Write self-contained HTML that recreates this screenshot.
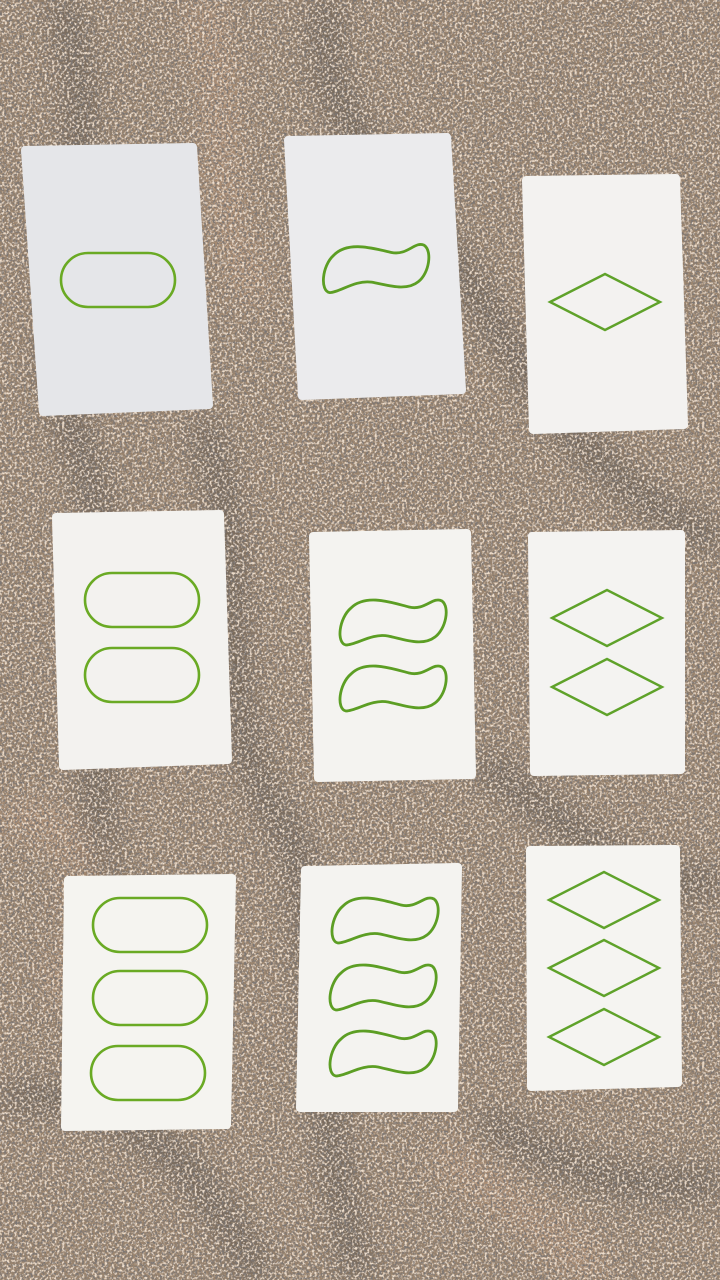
<!DOCTYPE html>
<html><head><meta charset="utf-8"><style>
html,body{margin:0;padding:0;width:720px;height:1280px;overflow:hidden;background:#9a846e}
svg{display:block}
</style></head><body>
<svg width="720" height="1280" viewBox="0 0 720 1280" xmlns="http://www.w3.org/2000/svg">
<defs>
<filter id="n" x="0" y="0" width="100%" height="100%">
<feTurbulence type="fractalNoise" baseFrequency="0.45" numOctaves="2" seed="3"/>
<feColorMatrix type="matrix" values="0 0 0 0 0.2  0 0 0 0 0.18  0 0 0 0 0.17  4 0 0 0 -1.7"/>
</filter>
<filter id="n2" x="0" y="0" width="100%" height="100%">
<feTurbulence type="fractalNoise" baseFrequency="0.4" numOctaves="2" seed="9"/>
<feColorMatrix type="matrix" values="0 0 0 0 0.85  0 0 0 0 0.72  0 0 0 0 0.6  4 0 0 0 -1.9"/>
</filter>
<filter id="b"><feGaussianBlur stdDeviation="14"/></filter>
<path id="sq" d="M-42,-14 C-27,-29 0,-19 16,-15 C32,-11 40,-26 49,-21 C57,-15 53,7 42,15 C29,25 10,17 -5,14 C-21,11 -37,23 -47,23 C-57,21 -54,-4 -42,-14 Z" fill="none" stroke="#5c9e24" stroke-width="2.8"/>
<rect id="ov" x="-57" y="-27" width="114" height="54" rx="27" fill="none" stroke="#6aaa24" stroke-width="2.6"/>
<path id="di" d="M-55,0 L0,-28 L55,0 L0,28 Z" fill="none" stroke="#5fa22a" stroke-width="2.4"/>
</defs>
<rect width="720" height="1280" fill="#9a846e"/>
<g filter="url(#b)" fill="none" stroke="#4a4440" stroke-width="30" opacity="0.55">
<path d="M60,0 C120,150 20,300 80,450 C140,600 60,800 120,950"/>
<path d="M330,0 C300,120 420,200 480,300 C560,430 620,500 720,540"/>
<path d="M200,420 C260,560 200,700 280,820 C330,900 300,1050 360,1280"/>
<path d="M480,760 C560,820 640,900 720,880"/>
<path d="M0,1100 C100,1080 200,1150 260,1280"/>
<path d="M480,1120 C560,1160 620,1200 720,1180"/>
</g>
<g filter="url(#b)" fill="none" stroke="#c09a7c" stroke-width="40" opacity="0.5">
<path d="M200,0 C240,100 200,200 260,300"/>
<path d="M0,820 C80,800 120,900 60,1000"/>
<path d="M440,1150 C500,1200 560,1230 600,1280"/>
</g>
<rect width="720" height="1280" filter="url(#n)"/>
<rect width="720" height="1280" filter="url(#n2)"/>
<g stroke-linejoin="round">
<polygon points="25,150 193,147 209,405 43,412" fill="#e5e6e9" stroke="#e5e6e9" stroke-width="8"/>
<polygon points="288,140 447,137 462,390 302,396" fill="#ebebed" stroke="#ebebed" stroke-width="8"/>
<polygon points="526,180 676,178 684,425 533,430" fill="#f3f2f0" stroke="#f3f2f0" stroke-width="8"/>
<polygon points="56,517 220,514 228,760 63,766" fill="#f3f2ef" stroke="#f3f2ef" stroke-width="8"/>
<polygon points="313,536 467,533 472,775 318,778" fill="#f4f3f0" stroke="#f4f3f0" stroke-width="8"/>
<polygon points="532,536 681,534 681,770 534,772" fill="#f4f3f1" stroke="#f4f3f1" stroke-width="8"/>
<polygon points="68,880 232,878 227,1125 65,1127" fill="#f5f4f0" stroke="#f5f4f0" stroke-width="8"/>
<polygon points="305,870 458,867 454,1108 300,1108" fill="#f4f3f0" stroke="#f4f3f0" stroke-width="8"/>
<polygon points="530,850 676,849 678,1083 531,1087" fill="#f5f4f1" stroke="#f5f4f1" stroke-width="8"/>
</g>
<use href="#ov" transform="translate(118,280)"/>
<use href="#sq" transform="translate(376,268) rotate(-2)"/>
<use href="#di" transform="translate(605,302)"/>
<use href="#ov" transform="translate(142,600)"/>
<use href="#ov" transform="translate(142,675)"/>
<use href="#sq" transform="translate(393,622)"/>
<use href="#sq" transform="translate(393,688)"/>
<use href="#di" transform="translate(607,618)"/>
<use href="#di" transform="translate(607,687)"/>
<use href="#ov" transform="translate(150,925)"/>
<use href="#ov" transform="translate(150,998)"/>
<use href="#ov" transform="translate(148,1073)"/>
<use href="#sq" transform="translate(385,920)"/>
<use href="#sq" transform="translate(383,987)"/>
<use href="#sq" transform="translate(383,1053)"/>
<use href="#di" transform="translate(604,900)"/>
<use href="#di" transform="translate(604,968)"/>
<use href="#di" transform="translate(604,1037)"/>
</svg>
</body></html>
